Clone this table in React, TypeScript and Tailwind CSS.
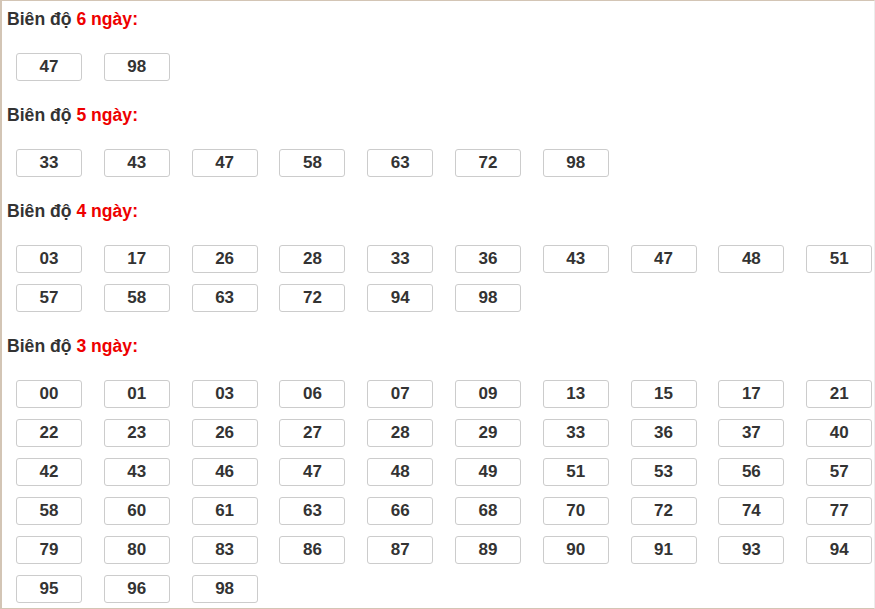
import React from "react";

const sections = [
  { days: 6, nums: ["47", "98"] },
  { days: 5, nums: ["33", "43", "47", "58", "63", "72", "98"] },
  {
    days: 4,
    nums: ["03", "17", "26", "28", "33", "36", "43", "47", "48", "51", "57", "58", "63", "72", "94", "98"],
  },
  {
    days: 3,
    nums: [
      "00", "01", "03", "06", "07", "09", "13", "15", "17", "21",
      "22", "23", "26", "27", "28", "29", "33", "36", "37", "40",
      "42", "43", "46", "47", "48", "49", "51", "53", "56", "57",
      "58", "60", "61", "63", "66", "68", "70", "72", "74", "77",
      "79", "80", "83", "86", "87", "89", "90", "91", "93", "94",
      "95", "96", "98",
    ],
  },
];

const App = () => {
  return (
    <div className="w-[875px] h-[609px] overflow-hidden bg-white border-l-2 border-t border-b border-[#d3c5b5] border-r border-r-[#ececec] font-['Liberation_Sans',Arial,sans-serif]">
      {sections.map((s, i) => (
        <div key={s.days} className={i === 0 ? "pt-[8px]" : "pt-[24px]"}>
          <p className="pl-[5px] text-[17.6px] leading-[20px] font-bold text-[#333]">
            Biên độ <span className="text-[#e00]">{s.days} ngày:</span>
          </p>
          <div className="mt-[24px] pl-[14px] grid grid-cols-[repeat(10,66px)] gap-x-[21.8px] gap-y-[11px]">
            {s.nums.map((n, j) => (
              <div
                key={j}
                className="h-[28px] border border-[#ccc] rounded-[3px] flex items-center justify-center text-[17px] font-bold text-[#333]"
              >
                {n}
              </div>
            ))}
          </div>
        </div>
      ))}
    </div>
  );
};

export default App;
